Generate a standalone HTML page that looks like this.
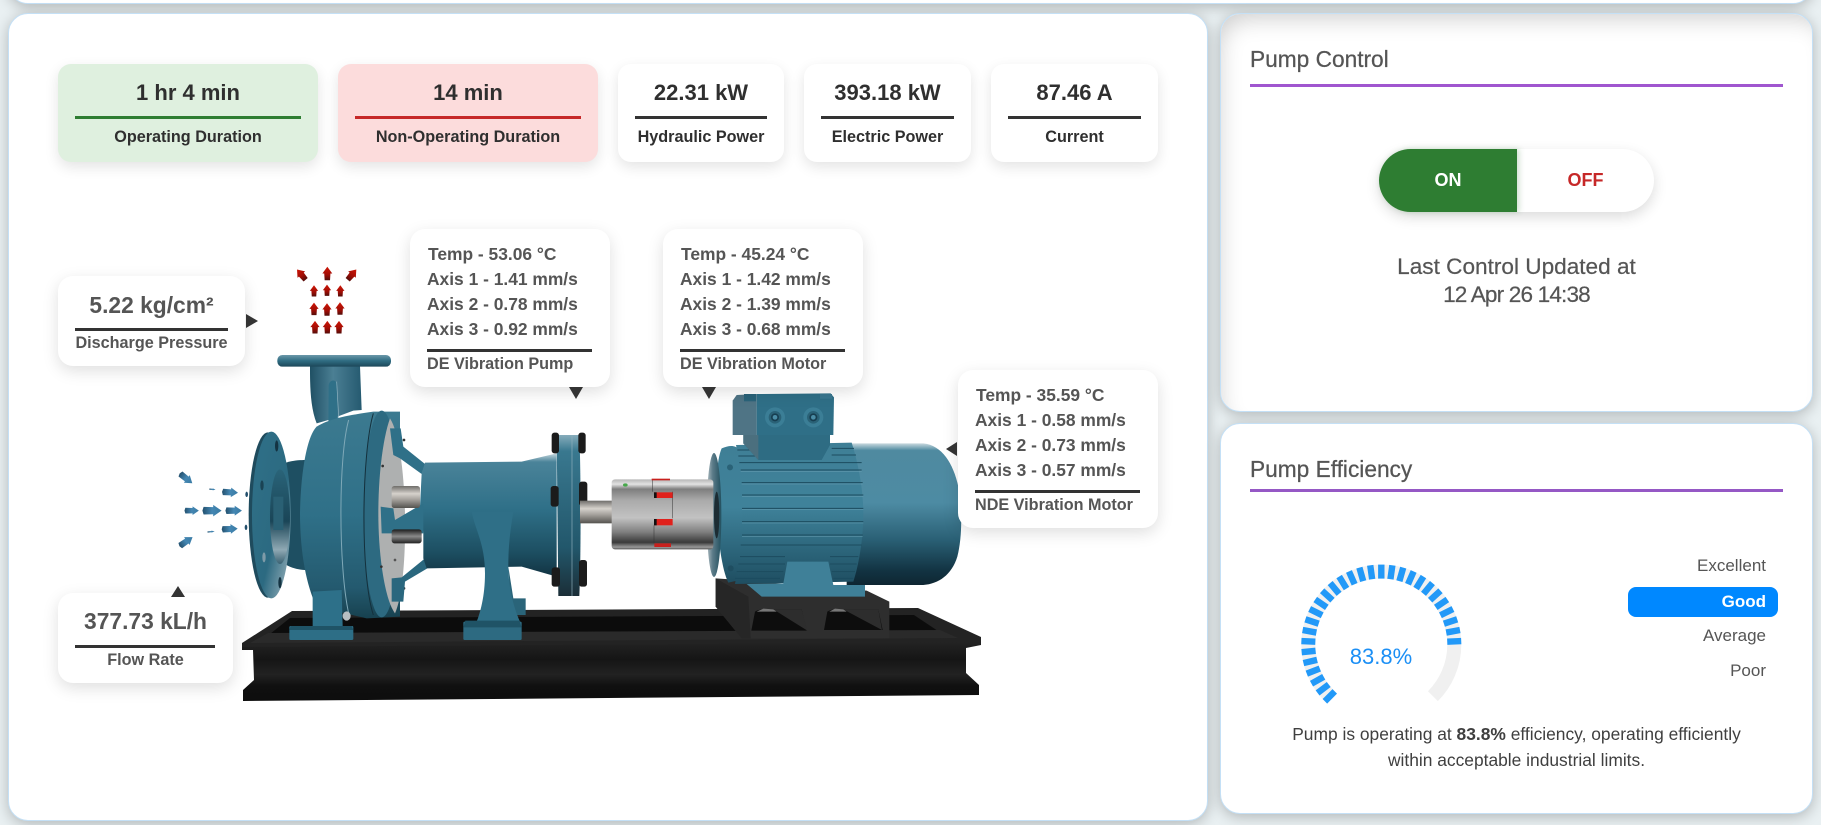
<!DOCTYPE html>
<html lang="en">
<head>
<meta charset="utf-8">
<title>Pump Dashboard</title>
<style>
*{box-sizing:border-box}
html,body{margin:0;padding:0;width:1821px;height:825px;overflow:hidden;background:#e9f0f2;font-family:"Liberation Sans",sans-serif}
.panel{position:absolute;background:#fff;border:1px solid #c4e0f6;border-radius:20px;box-shadow:0 3px 14px rgba(0,0,0,.24)}
.card{position:absolute;top:64px;height:98px;background:#fff;border-radius:13px;box-shadow:0 5px 14px rgba(0,0,0,.11);text-align:center;color:#2f2f2f}
.card .v{position:absolute;left:0;right:0;top:15px;line-height:28px;font-size:22px;font-weight:700}
.card .l{position:absolute;left:17px;right:17px;top:52px;height:3px;background:#333}
.card .t{position:absolute;left:0;right:0;top:63px;line-height:20px;font-size:16.2px;font-weight:700}
.box{position:absolute;background:#fff;border-radius:15px;box-shadow:0 5px 16px rgba(0,0,0,.13);color:#555;font-weight:700}
.abs{position:absolute;white-space:nowrap}
.rule{position:absolute;height:3px;background:#333}
.lb{font-size:16.2px}
.h{position:absolute;left:1250px;font-size:22.7px;line-height:28px;color:#555;white-space:nowrap;-webkit-text-stroke:.25px #555}
.pl{position:absolute;left:1250px;width:533px;height:3px}
.leg{position:absolute;right:55px;font-size:17px;line-height:22px;color:#555;white-space:nowrap}
svg{position:absolute;left:0;top:0}
</style>
</head>
<body>

<div class="panel" style="left:8px;top:-40px;width:1805px;height:44px"></div>
<div class="panel" style="left:8px;top:13px;width:1200px;height:808px"></div>
<div class="panel" style="left:1220px;top:13px;width:593px;height:399px;box-shadow:0 3px 14px rgba(0,0,0,.24),inset 8px 14px 24px -10px rgba(0,0,0,.2)"></div>
<div class="panel" style="left:1220px;top:423px;width:593px;height:391px"></div>

<!-- KPI cards -->
<div class="card" style="left:58px;width:260px;background:#dff0df"><div class="v">1 hr 4 min</div><div class="l" style="background:#2e7d32"></div><div class="t">Operating Duration</div></div>
<div class="card" style="left:338px;width:260px;background:#fcdcdc"><div class="v">14 min</div><div class="l" style="background:#c62828"></div><div class="t">Non-Operating Duration</div></div>
<div class="card" style="left:618px;width:166px"><div class="v">22.31 kW</div><div class="l"></div><div class="t">Hydraulic Power</div></div>
<div class="card" style="left:804px;width:167px"><div class="v">393.18 kW</div><div class="l"></div><div class="t">Electric Power</div></div>
<div class="card" style="left:991px;width:167px"><div class="v">87.46 A</div><div class="l"></div><div class="t">Current</div></div>

<!-- Pump illustration and gauge -->
<svg width="1821" height="825" viewBox="0 0 1821 825" xmlns="http://www.w3.org/2000/svg">
<defs>
<linearGradient id="tV" x1="0" y1="0" x2="0" y2="1"><stop offset="0" stop-color="#c6d8df"/><stop offset=".07" stop-color="#4a8399"/><stop offset=".45" stop-color="#2f7088"/><stop offset=".8" stop-color="#1d4f62"/><stop offset="1" stop-color="#123342"/></linearGradient>
<linearGradient id="vol" x1="0" y1="0" x2="0" y2="1"><stop offset="0" stop-color="#3c7a90"/><stop offset=".5" stop-color="#2f7088"/><stop offset=".85" stop-color="#245a6f"/><stop offset="1" stop-color="#17414f"/></linearGradient>
<linearGradient id="mot" x1="0" y1="0" x2="0" y2="1"><stop offset="0" stop-color="#c9d9df"/><stop offset=".05" stop-color="#4f8aa0"/><stop offset=".42" stop-color="#4d8ba3"/><stop offset=".68" stop-color="#2a6075"/><stop offset=".9" stop-color="#123342"/><stop offset="1" stop-color="#0e2632"/></linearGradient>
<linearGradient id="fin" x1="0" y1="0" x2="0" y2="1"><stop offset="0" stop-color="#3f7f96"/><stop offset=".45" stop-color="#3f829a"/><stop offset=".8" stop-color="#2a6277"/><stop offset="1" stop-color="#1f4e61"/></linearGradient>
<linearGradient id="silv" x1="0" y1="0" x2="0" y2="1"><stop offset="0" stop-color="#b5b5b5"/><stop offset=".07" stop-color="#e2e2e2"/><stop offset=".14" stop-color="#7e7e7e"/><stop offset=".3" stop-color="#aaa"/><stop offset=".55" stop-color="#c2c2c2"/><stop offset=".75" stop-color="#808080"/><stop offset=".9" stop-color="#3a3a3a"/><stop offset=".97" stop-color="#999"/><stop offset="1" stop-color="#555"/></linearGradient>
<linearGradient id="sh" x1="0" y1="0" x2="0" y2="1"><stop offset="0" stop-color="#6f6d6a"/><stop offset=".35" stop-color="#d6d2cc"/><stop offset=".6" stop-color="#a8a49f"/><stop offset="1" stop-color="#55534f"/></linearGradient>
<linearGradient id="sh2" x1="0" y1="0" x2="0" y2="1"><stop offset="0" stop-color="#1c1c1c"/><stop offset=".5" stop-color="#8a8a8a"/><stop offset="1" stop-color="#222"/></linearGradient>
<linearGradient id="fl" x1="0" y1="0" x2="0" y2="1"><stop offset="0" stop-color="#6b98a9"/><stop offset=".5" stop-color="#2f6c82"/><stop offset="1" stop-color="#1c4759"/></linearGradient>
<linearGradient id="rf" x1="0" y1="0" x2="0" y2="1"><stop offset="0" stop-color="#86acbb"/><stop offset=".1" stop-color="#39788f"/><stop offset=".7" stop-color="#22576b"/><stop offset="1" stop-color="#1b2e37"/></linearGradient>
<linearGradient id="neck" x1="0" y1="0" x2="1" y2="0"><stop offset="0" stop-color="#1f5064"/><stop offset=".45" stop-color="#4b7f94"/><stop offset="1" stop-color="#255a70"/></linearGradient>
<linearGradient id="face" x1="0" y1="0" x2="1" y2="1"><stop offset="0" stop-color="#2f7088"/><stop offset=".6" stop-color="#2c6a81"/><stop offset="1" stop-color="#a4b8c1"/></linearGradient>
<linearGradient id="hub" x1="0" y1="0" x2="0" y2="1"><stop offset="0" stop-color="#2a6479"/><stop offset=".55" stop-color="#1a4557"/><stop offset=".85" stop-color="#8fa9b4"/><stop offset="1" stop-color="#3a6272"/></linearGradient>
<linearGradient id="fr" x1="0" y1="0" x2="0" y2="1"><stop offset="0" stop-color="#232323"/><stop offset=".3" stop-color="#151515"/><stop offset=".55" stop-color="#222"/><stop offset=".75" stop-color="#101010"/><stop offset="1" stop-color="#0d0d0d"/></linearGradient>
<linearGradient id="ra" x1="0" y1="0" x2="0" y2="1"><stop offset="0" stop-color="#cf1606"/><stop offset=".6" stop-color="#a00d05"/><stop offset="1" stop-color="#530d0a"/></linearGradient>
<linearGradient id="ba" x1="0" y1="0" x2="1" y2="0"><stop offset="0" stop-color="#234f6c"/><stop offset=".5" stop-color="#4487b3"/><stop offset="1" stop-color="#3a7ba4"/></linearGradient>
<linearGradient id="fp" x1="0" y1="0" x2="1" y2="0"><stop offset="0" stop-color="#b3c0c5"/><stop offset=".4" stop-color="#5d7c89"/><stop offset="1" stop-color="#22505f"/></linearGradient>
<path id="up" d="M0 -7 L4.8 -.5 L3 -.5 L2.6 6 L-2.6 6 L-3 -.5 L-4.8 -.5Z" fill="url(#ra)"/>
<path id="rt" d="M8 0 L1 -4.8 L1 -3 L-7 -3.2 L-8 0 L-7 3.2 L1 3 L1 4.8Z" fill="url(#ba)"/>
</defs>

<!-- Base frame -->
<polygon points="292,611 918,608 981,637 981,644 242,650 242,643" fill="#232323"/>
<polygon points="290,618 914,615 938,631 270,634" fill="#0c0c0c"/>
<polygon points="268,633 940,630 958,638 250,643" fill="#2a2a2a"/>
<path d="M242 647 L981 642 L981 645 L966 648 L966 673 L979 685 L979 695 L243 701 L243 690 L254 680 L253 650 L242 650Z" fill="url(#fr)"/>

<!-- Pump: coordinates are 3x crop units -->
<g transform="translate(160,340) scale(.33333)">
  <path d="M340 390C370 360 420 360 440 360L440 690C410 690 370 680 340 640Z" fill="#1e4f62"/>
  <ellipse cx="324" cy="525" rx="58" ry="248" fill="#1f4b5d"/>
  <ellipse cx="334" cy="525" rx="58" ry="250" fill="url(#face)"/>
  <ellipse cx="360" cy="530" rx="30" ry="142" fill="url(#hub)"/>
  <ellipse cx="350" cy="318" rx="5" ry="17" fill="#143342"/>
  <ellipse cx="360" cy="728" rx="5" ry="17" fill="#143342"/>
  <ellipse cx="306" cy="436" rx="5" ry="15" fill="#1a4354"/>
  <ellipse cx="312" cy="652" rx="5" ry="15" fill="#7e9ba8"/>
  <rect x="340" y="470" width="30" height="100" fill="#2a6074"/>

  <path d="M450 78C450 130 450 200 470 250L505 240L580 212L605 210L600 78Z" fill="url(#neck)"/>
  <rect x="352" y="45" width="341" height="35" rx="15" fill="url(#fl)"/>
  <path d="M506 135C510 118 526 118 530 130L535 270L505 272Z" fill="#2f7088"/>
  <path d="M530 125L538 265" stroke="#8fb3c1" stroke-width="2" fill="none"/>

  <path d="M470 260C440 290 422 400 420 520C420 640 440 740 470 800L620 835L720 830L720 215L640 215C570 225 510 235 470 260Z" fill="url(#vol)"/>
  <ellipse cx="665" cy="522" rx="55" ry="310" fill="#2d6a81"/>
  <path d="M566 240C535 350 535 680 566 820" stroke="#7fa9b8" stroke-width="3" fill="none"/>
  <path d="M640 220C605 340 600 700 640 825" stroke="#14303c" stroke-width="3" fill="none"/>
  <path d="M690 235C745 320 750 720 705 820C675 780 655 650 655 520C655 400 670 290 690 235Z" fill="#aeb0b0"/>
  <circle cx="668" cy="378" r="4" fill="#333"/><circle cx="664" cy="680" r="4" fill="#333"/><circle cx="705" cy="660" r="4" fill="#555"/><circle cx="732" cy="300" r="4" fill="#333"/><circle cx="732" cy="745" r="4" fill="#333"/>

  <polygon points="690,265 722,265 730,320 795,372 785,402 720,355 700,345" fill="#2f7088"/>
  <polygon points="695,715 725,712 795,655 802,685 735,725 730,785 695,785" fill="#2a677e"/>
  <path d="M795 368L1085 365L1190 340L1190 710L1085 680L800 685L790 655L790 580L780 500L785 400Z" fill="url(#tV)"/>
  <polygon points="662,500 700,505 705,540 790,490 790,580 665,580" fill="#2f7088"/>
  <rect x="695" y="438" width="85" height="66" rx="8" fill="url(#sh)"/>
  <rect x="695" y="568" width="90" height="42" rx="8" fill="url(#sh2)"/>

  <polygon points="1045,680 1060,775 1097,775 1097,825 1050,825" fill="#2a6479"/>
  <path d="M935 515C945 570 975 610 975 700C975 770 960 820 950 845L1080 845C1060 800 1045 740 1045 680C1045 600 1055 550 1060 515Z" fill="#2f6f87"/>
  <rect x="910" y="845" width="175" height="55" rx="4" fill="#2d6a81"/>
  <polygon points="916,842 1078,842 1085,862 910,862" fill="#1f5366"/>
  <polygon points="458,755 545,750 548,858 458,858" fill="#2d7089"/>
  <rect x="388" y="858" width="192" height="42" rx="4" fill="#2d6e86"/>
  <polygon points="392,858 575,858 580,870 388,870" fill="#1f5366"/>
  <ellipse cx="560" cy="828" rx="12" ry="14" fill="#b8bfc2"/>

  <path d="M1190 285L1258 285C1263 400 1263 650 1258 768L1195 768Z" fill="url(#rf)"/>
  <path d="M1236 285V768" stroke="#8fb0bd" stroke-width="2"/>
  <g fill="#1b1b1b"><rect x="1175" y="278" width="22" height="62" rx="8"/><rect x="1255" y="278" width="22" height="62" rx="8"/><rect x="1172" y="438" width="24" height="62" rx="8"/><rect x="1257" y="425" width="25" height="72" rx="8"/><rect x="1175" y="682" width="25" height="58" rx="8"/><rect x="1257" y="660" width="24" height="80" rx="8"/></g>
  <rect x="1260" y="482" width="100" height="68" fill="url(#sh)"/>

  <ellipse cx="260" cy="463" rx="4" ry="8" fill="#234f6c"/>
  <ellipse cx="258" cy="562" rx="4" ry="8" fill="#234f6c"/>
</g>

<!-- Motor -->
<g transform="translate(560,380) scale(.33333)">
  <polygon points="467,595 540,600 920,632 988,665 988,775 545,775 467,680" fill="#2e2e2e"/>
  <polygon points="467,595 565,650 572,775 545,775 467,680" fill="#262626"/>
  <path d="M574 752L585 695Q600 685 640 688L725 688L740 752Z" fill="#0d0d0d"/>
  <polygon points="640,688 725,688 742,752" fill="#2d2d2d"/>
  <path d="M792 750L802 695Q815 685 850 688L955 688L968 750Z" fill="#0d0d0d"/>
  <polygon points="850,688 955,688 966,750" fill="#2d2d2d"/>
  <polygon points="590,695 610,686 640,688 650,695" fill="#777"/>
  <polygon points="808,695 825,686 850,688 860,695" fill="#777"/>

  <path d="M860 190L1090 190C1145 195 1180 250 1195 320C1207 390 1207 470 1192 530C1175 585 1135 612 1090 615L860 615Z" fill="url(#mot)"/>

  <path d="M485 205C510 195 525 195 540 210C558 330 558 480 540 600L505 608C470 540 455 270 485 205Z" fill="url(#fin)"/>
  <ellipse cx="462" cy="405" rx="22" ry="186" fill="url(#fp)"/>
  <ellipse cx="470" cy="405" rx="8" ry="70" fill="#1c2c33"/>

  <path d="M528 195L875 188C895 250 910 330 910 400C910 480 895 560 880 605L525 612C548 500 552 300 528 195Z" fill="url(#fin)"/>
  <g stroke="#1c4c5f" stroke-width="3" fill="none">
    <path d="M532 210H590M815 205H882M535 228H590M815 225H888M538 248H905M542 270H905M545 308H908M546 345H910M546 385H910M546 425H910M546 465H908M542 495H905"/>
    <path d="M540 530H675M810 530H895M535 552H675M810 552H890M530 575H670M815 575H885M525 595H660M820 595H880"/>
  </g>
  <g stroke="#6ba2b6" stroke-width="1.5" fill="none">
    <path d="M542 274H905M545 312H908M546 349H910M546 389H910M546 429H910M546 469H908"/>
  </g>

  <polygon points="550,165 810,165 810,195 785,240 595,240 550,190" fill="#2e6c83"/>
  <polygon points="550,165 595,165 595,240 550,190" fill="#4b6f7e"/>
  <polygon points="530,45 590,42 590,165 518,165 518,62" fill="#4f7485"/>
  <polygon points="590,42 812,40 822,52 820,165 590,165" fill="#2f6f87"/>
  <rect x="552" y="42" width="36" height="22" fill="#2a6379"/>
  <rect x="780" y="42" width="36" height="14" fill="#3a7890"/>
  <circle cx="645" cy="112" r="30" fill="#3b7e96"/><circle cx="645" cy="112" r="19" fill="#2a6277"/><circle cx="645" cy="112" r="12" fill="#173e50"/><circle cx="645" cy="112" r="7" fill="#4b8da6"/>
  <circle cx="760" cy="112" r="30" fill="#3b7e96"/><circle cx="760" cy="112" r="19" fill="#2a6277"/><circle cx="760" cy="112" r="12" fill="#173e50"/><circle cx="760" cy="112" r="7" fill="#4b8da6"/>

  <path d="M682 545L805 545L820 615L915 615L915 650L605 650L560 612L670 610Z" fill="#3f8098"/>
  <circle cx="510" cy="262" r="9" fill="#2a6277"/><circle cx="512" cy="565" r="9" fill="#1f4e61"/>

  <rect x="155" y="298" width="305" height="210" rx="10" fill="url(#silv)"/>
  <path d="M278 298V335M338 335V415M282 436V490" stroke="#333" stroke-width="1.5" fill="none"/>
  <rect x="275" y="296" width="55" height="5" fill="#c8201d"/>
  <rect x="282" y="337" width="56" height="17" fill="#e0211c"/>
  <rect x="282" y="337" width="8" height="17" fill="#111"/>
  <rect x="282" y="417" width="56" height="19" fill="#e0211c"/>
  <rect x="282" y="417" width="8" height="19" fill="#111"/>
  <rect x="283" y="490" width="50" height="11" fill="#c8201d"/>
  <ellipse cx="196" cy="315" rx="7" ry="5" fill="#46a84a"/>
</g>

<!-- Red arrows -->
<g transform="translate(160,250) scale(.33333)">
  <use href="#up" transform="translate(425,75) rotate(-40) scale(3.1)"/>
  <use href="#up" transform="translate(502,72) scale(3.1)"/>
  <use href="#up" transform="translate(575,75) rotate(40) scale(3.1)"/>
  <use href="#up" transform="translate(462,124) scale(2.6)"/>
  <use href="#up" transform="translate(501,122) scale(2.6)"/>
  <use href="#up" transform="translate(541,124) scale(2.6)"/>
  <use href="#up" transform="translate(462,178) scale(2.9)"/>
  <use href="#up" transform="translate(501,180) scale(2.9)"/>
  <use href="#up" transform="translate(540,177) scale(2.9)"/>
  <use href="#up" transform="translate(465,233) scale(2.9)"/>
  <use href="#up" transform="translate(502,233) scale(2.9)"/>
  <use href="#up" transform="translate(537,233) scale(2.9)"/>
</g>
<!-- Blue arrows -->
<g transform="translate(160,450) scale(.33333)">
  <use href="#rt" transform="translate(78,85) rotate(38) scale(3)"/>
  <use href="#rt" transform="translate(210,127) rotate(3) scale(3)"/>
  <use href="#rt" transform="translate(157,118) rotate(5) scale(1.2,.6)"/>
  <use href="#rt" transform="translate(95,182) scale(2.7)"/>
  <use href="#rt" transform="translate(156,182) scale(3.6)"/>
  <use href="#rt" transform="translate(221,182) scale(3.1)"/>
  <use href="#rt" transform="translate(209,237) rotate(-3) scale(3)"/>
  <use href="#rt" transform="translate(153,245) rotate(-5) scale(1.4,.6)"/>
  <use href="#rt" transform="translate(78,275) rotate(-35) scale(3)"/>
</g>

<!-- Gauge -->
<path d="M1329.7 696.2A73 73 0 1 1 1432.9 696.2" fill="none" stroke="#f0f0f0" stroke-width="14"/>
<g fill="#2299f8" transform="translate(1381.3,644.6)">
  <rect x="-3.2" y="-80" width="6.4" height="14" transform="rotate(-135.15)"/>
  <rect x="-3.2" y="-80" width="6.4" height="14" transform="rotate(-127.2)"/>
  <rect x="-3.2" y="-80" width="6.4" height="14" transform="rotate(-119.25)"/>
  <rect x="-3.2" y="-80" width="6.4" height="14" transform="rotate(-111.3)"/>
  <rect x="-3.2" y="-80" width="6.4" height="14" transform="rotate(-103.35)"/>
  <rect x="-3.2" y="-80" width="6.4" height="14" transform="rotate(-95.4)"/>
  <rect x="-3.2" y="-80" width="6.4" height="14" transform="rotate(-87.45)"/>
  <rect x="-3.2" y="-80" width="6.4" height="14" transform="rotate(-79.5)"/>
  <rect x="-3.2" y="-80" width="6.4" height="14" transform="rotate(-71.55)"/>
  <rect x="-3.2" y="-80" width="6.4" height="14" transform="rotate(-63.6)"/>
  <rect x="-3.2" y="-80" width="6.4" height="14" transform="rotate(-55.65)"/>
  <rect x="-3.2" y="-80" width="6.4" height="14" transform="rotate(-47.7)"/>
  <rect x="-3.2" y="-80" width="6.4" height="14" transform="rotate(-39.75)"/>
  <rect x="-3.2" y="-80" width="6.4" height="14" transform="rotate(-31.8)"/>
  <rect x="-3.2" y="-80" width="6.4" height="14" transform="rotate(-23.85)"/>
  <rect x="-3.2" y="-80" width="6.4" height="14" transform="rotate(-15.9)"/>
  <rect x="-3.2" y="-80" width="6.4" height="14" transform="rotate(-7.95)"/>
  <rect x="-3.2" y="-80" width="6.4" height="14"/>
  <rect x="-3.2" y="-80" width="6.4" height="14" transform="rotate(7.95)"/>
  <rect x="-3.2" y="-80" width="6.4" height="14" transform="rotate(15.9)"/>
  <rect x="-3.2" y="-80" width="6.4" height="14" transform="rotate(23.85)"/>
  <rect x="-3.2" y="-80" width="6.4" height="14" transform="rotate(31.8)"/>
  <rect x="-3.2" y="-80" width="6.4" height="14" transform="rotate(39.75)"/>
  <rect x="-3.2" y="-80" width="6.4" height="14" transform="rotate(47.7)"/>
  <rect x="-3.2" y="-80" width="6.4" height="14" transform="rotate(55.65)"/>
  <rect x="-3.2" y="-80" width="6.4" height="14" transform="rotate(63.6)"/>
  <rect x="-3.2" y="-80" width="6.4" height="14" transform="rotate(71.55)"/>
  <rect x="-3.2" y="-80" width="6.4" height="14" transform="rotate(79.5)"/>
  <rect x="-3.2" y="-80" width="6.4" height="14" transform="rotate(87.45)"/>
</g>
</svg>

<!-- Callouts -->
<div class="box" style="left:58px;top:276px;width:187px;height:90px">
  <div class="abs" style="left:0;right:0;text-align:center;top:15px;line-height:28px;font-size:22.8px">5.22 kg/cm²</div>
  <div class="rule" style="left:17px;width:153px;top:52px"></div>
  <div class="abs lb" style="left:0;right:0;text-align:center;top:57px;line-height:20px">Discharge Pressure</div>
</div>

<div class="box" style="left:58px;top:593px;width:175px;height:90px">
  <div class="abs" style="left:0;right:0;text-align:center;top:14px;line-height:28px;font-size:22.8px">377.73 kL/h</div>
  <div class="rule" style="left:17px;width:140px;top:52px"></div>
  <div class="abs lb" style="left:0;right:0;text-align:center;top:57px;line-height:20px">Flow Rate</div>
</div>

<div class="box" style="left:410px;top:229px;width:200px;height:158px;font-size:17.4px">
  <div class="abs" style="left:18px;top:15px;line-height:20px">Temp - 53.06 °C</div>
  <div class="abs" style="left:17px;top:40px;line-height:20px">Axis 1 - 1.41 mm/s</div>
  <div class="abs" style="left:17px;top:65px;line-height:20px">Axis 2 - 0.78 mm/s</div>
  <div class="abs" style="left:17px;top:90px;line-height:20px">Axis 3 - 0.92 mm/s</div>
  <div class="rule" style="left:17px;width:165px;top:120px"></div>
  <div class="abs lb" style="left:17px;top:125px;line-height:20px">DE Vibration Pump</div>
</div>

<div class="box" style="left:663px;top:229px;width:200px;height:158px;font-size:17.4px">
  <div class="abs" style="left:18px;top:15px;line-height:20px">Temp - 45.24 °C</div>
  <div class="abs" style="left:17px;top:40px;line-height:20px">Axis 1 - 1.42 mm/s</div>
  <div class="abs" style="left:17px;top:65px;line-height:20px">Axis 2 - 1.39 mm/s</div>
  <div class="abs" style="left:17px;top:90px;line-height:20px">Axis 3 - 0.68 mm/s</div>
  <div class="rule" style="left:17px;width:165px;top:120px"></div>
  <div class="abs lb" style="left:17px;top:125px;line-height:20px">DE Vibration Motor</div>
</div>

<div class="box" style="left:958px;top:370px;width:200px;height:158px;font-size:17.4px">
  <div class="abs" style="left:18px;top:15px;line-height:20px">Temp - 35.59 °C</div>
  <div class="abs" style="left:17px;top:40px;line-height:20px">Axis 1 - 0.58 mm/s</div>
  <div class="abs" style="left:17px;top:65px;line-height:20px">Axis 2 - 0.73 mm/s</div>
  <div class="abs" style="left:17px;top:90px;line-height:20px">Axis 3 - 0.57 mm/s</div>
  <div class="rule" style="left:17px;width:165px;top:120px"></div>
  <div class="abs lb" style="left:17px;top:125px;line-height:20px">NDE Vibration Motor</div>
</div>

<!-- Pointer triangles sit above the callouts -->
<svg width="1821" height="825" viewBox="0 0 1821 825" xmlns="http://www.w3.org/2000/svg">
<g fill="#333">
  <polygon points="246,314 258,321 246,328"/>
  <polygon points="569,387 583,387 576,399"/>
  <polygon points="702,387 716,387 709,399"/>
  <polygon points="957,442 957,456 946,449"/>
  <polygon points="171,597 185,597 178,586"/>
</g>
</svg>

<!-- Pump Control -->
<div class="h" style="top:45px">Pump Control</div>
<div class="pl" style="top:84px;background:#a056cf"></div>
<div class="abs" style="left:1379px;top:149px;width:275px;height:63px;border-radius:32px;background:#fff;box-shadow:0 5px 14px rgba(0,0,0,.14)"></div>
<div class="abs" style="left:1379px;top:149px;width:138px;height:63px;border-radius:32px 0 0 32px;background:#2e7d32;box-shadow:2px 0 6px rgba(46,125,50,.25);color:#fff;font-size:18px;font-weight:700;line-height:63px;text-align:center">ON</div>
<div class="abs" style="left:1517px;top:149px;width:137px;height:63px;color:#c62828;font-size:18px;font-weight:700;line-height:63px;text-align:center">OFF</div>
<div class="abs" style="left:1250px;width:533px;top:253px;text-align:center;font-size:22.6px;line-height:28px;color:#555;-webkit-text-stroke:.2px #555">Last Control Updated at</div>
<div class="abs" style="left:1250px;width:533px;top:281px;text-align:center;font-size:22.6px;letter-spacing:-.85px;line-height:28px;color:#555;-webkit-text-stroke:.2px #555">12 Apr 26 14:38</div>

<!-- Pump Efficiency -->
<div class="h" style="top:455px">Pump Efficiency</div>
<div class="pl" style="top:489px;background:#9558c5"></div>
<div class="abs" style="left:1301px;width:160px;top:643px;text-align:center;font-size:22px;line-height:28px;color:#1b8ff5">83.8%</div>
<div class="leg" style="top:555px">Excellent</div>
<div class="abs" style="left:1628px;top:587px;width:150px;height:30px;border-radius:8px;background:#0088ff;color:#fff;font-size:17px;font-weight:700;line-height:29px;text-align:right;padding-right:12px">Good</div>
<div class="leg" style="top:625px">Average</div>
<div class="leg" style="top:660px">Poor</div>
<div class="abs" style="left:1250px;width:533px;top:723px;text-align:center;font-size:17.4px;line-height:22px;color:#3f3f3f">Pump is operating at <b>83.8%</b> efficiency, operating efficiently</div>
<div class="abs" style="left:1250px;width:533px;top:749px;text-align:center;font-size:17.4px;line-height:22px;color:#3f3f3f">within acceptable industrial limits.</div>

</body>
</html>
